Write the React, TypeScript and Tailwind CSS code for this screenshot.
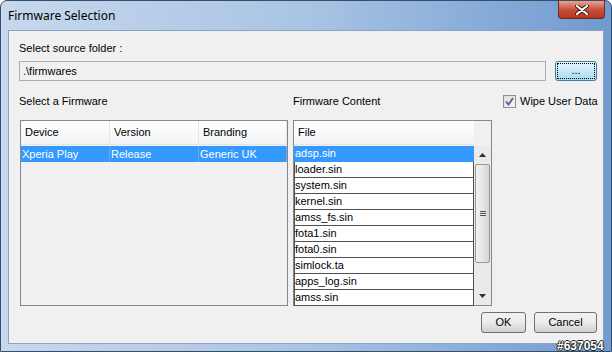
import { useState } from "react";

const firmwares = [{ device: "Xperia Play", version: "Release", branding: "Generic UK" }];

const files = [
  "adsp.sin",
  "loader.sin",
  "system.sin",
  "kernel.sin",
  "amss_fs.sin",
  "fota1.sin",
  "fota0.sin",
  "simlock.ta",
  "apps_log.sin",
  "amss.sin",
];

const font = { fontFamily: "Tahoma, 'Liberation Sans', Arial, sans-serif" };

export default function App() {
  const [wipe, setWipe] = useState(true);
  const [selectedFile] = useState(0);

  return (
    <div
      className="relative w-[612px] h-[352px] flex flex-col rounded-t-[7px] border border-[#3a4d66] bg-gradient-to-r from-[#c6d8ed] via-[#a9c4e4] to-[#6f9ad0] text-[11px] text-black overflow-hidden"
      style={font}
    >
      {/* Title bar */}
      <div className="h-[29px] flex items-start justify-between pl-[7px] pr-[6px] shrink-0">
        <span className="mt-[6px] text-[12px] text-black" style={{ fontFamily: "'Noto Sans', 'Liberation Sans', sans-serif" }}>
          Firmware Selection
        </span>
        <button className="w-[47px] h-[18px] rounded-b-[4px] border border-t-0 border-[#6b2a22] bg-gradient-to-b from-[#e8a393] via-[#c75040] to-[#b8341f] flex items-center justify-center">
          <svg width="14" height="10" viewBox="0 0 14 10">
            <path d="M2 1 L12 9 M12 1 L2 9" stroke="#3b1a14" strokeWidth="4" strokeLinecap="round" />
            <path d="M2 1 L12 9 M12 1 L2 9" stroke="#ffffff" strokeWidth="2.2" strokeLinecap="round" />
          </svg>
        </button>
      </div>

      {/* Client area */}
      <div className="mx-[7px] mb-[7px] flex-1 flex flex-col bg-[#f0f0f0] border border-[#8aa3c2] pl-[10px] pr-[6px] pt-[9px]">
        <div className="h-[16px] leading-[16px]">Select source folder :</div>

        <div className="mt-[5px] flex items-center gap-[9px]">
          <div className="w-[529px] h-[20px] bg-[#f0f0f0] border border-[#abadb3] flex items-center pl-[3px]">.\firmwares</div>
          <button className="w-[42px] h-[20px] rounded-[3px] border border-[#3c7fb1] bg-gradient-to-b from-[#eaf6fd] to-[#a7d9f5] flex items-center justify-center">
            <span className="w-[38px] h-[16px] border border-dotted border-black flex items-center justify-center leading-none pb-[2px]">...</span>
          </button>
        </div>

        <div className="mt-[12px] h-[16px] flex items-center leading-[16px] whitespace-nowrap">
          <span className="w-[274px] shrink-0">Select a Firmware</span>
          <span className="w-[210px] shrink-0">Firmware Content</span>
          <label className="flex items-center gap-[4px] shrink-0">
            <span
              onClick={() => setWipe(!wipe)}
              className="w-[13px] h-[13px] border border-[#8f8f8f] bg-gradient-to-br from-[#dcdcdc] to-[#f7f7f7] flex items-center justify-center"
            >
              {wipe && (
                <svg width="9" height="9" viewBox="0 0 9 9">
                  <path d="M1 4.5 L3.5 7.5 L8 1" stroke="#4a5f97" strokeWidth="1.8" fill="none" />
                </svg>
              )}
            </span>
            <span>Wipe User Data</span>
          </label>
        </div>

        <div className="mt-[11px] flex gap-[5px] h-[186px]">
          {/* Firmware table */}
          <div className="ml-[1px] w-[268px] h-full border border-[#828790] bg-[#f0f0f0] flex flex-col">
            <div className="h-[24px] flex bg-gradient-to-b from-[#ffffff] to-[#f3f4f6] border-b border-[#e5e5e5]">
              {["Device", "Version", "Branding"].map((h, i) => (
                <div
                  key={h}
                  className={`h-full flex items-center pl-[4px] border-r border-[#e3e6ea] ${i === 2 ? "flex-1" : "w-[89px]"}`}
                >
                  {h}
                </div>
              ))}
            </div>
            {firmwares.map((f) => (
              <div key={f.device} className="mt-[1px] h-[16px] flex bg-[#3399ff] text-white">
                <div className="w-[89px] pl-[1px] border-r border-[#7aa5cf] leading-[16px]">{f.device}</div>
                <div className="w-[89px] pl-[1px] border-r border-[#7aa5cf] leading-[16px]">{f.version}</div>
                <div className="flex-1 pl-[1px] border-r border-[#7aa5cf] leading-[16px]">{f.branding}</div>
              </div>
            ))}
          </div>

          {/* Files table */}
          <div className="w-[199px] h-full border border-[#828790] bg-[#f0f0f0] flex flex-col">
            <div className="h-[24px] flex">
              <div className="w-[180px] h-full flex items-center pl-[4px] bg-gradient-to-b from-[#ffffff] to-[#f3f4f6] border-b border-[#e5e5e5]">
                File
              </div>
              <div className="flex-1 bg-[#f0f0f0]" />
            </div>
            <div className="mt-[1px] flex flex-1 min-h-0">
              <div className="w-[180px] flex flex-col">
                {files.map((f, i) => (
                  <div
                    key={f}
                    className={`h-[16px] leading-[15px] border-l border-b border-r ${
                      i === selectedFile
                        ? "bg-[#3399ff] text-white border-[#3399ff]"
                        : "bg-white text-black border-[#505050]"
                    }`}
                  >
                    {f}
                  </div>
                ))}
              </div>
              {/* Scrollbar */}
              <div className="flex-1 flex flex-col items-center bg-[#eaeaea]">
                <div className="h-[18px] w-full flex items-center justify-center">
                  <svg width="7" height="4" viewBox="0 0 7 4">
                    <path d="M0 4 L3.5 0 L7 4 Z" fill="#303030" />
                  </svg>
                </div>
                <div className="w-[15px] h-[99px] rounded-[2px] border border-[#979797] bg-gradient-to-r from-[#f2f2f2] via-[#e6e6e6] to-[#d4d4d4] flex items-center justify-center">
                  <div className="flex flex-col gap-[1px]">
                    <div className="w-[6px] h-[1px] bg-[#555]" />
                    <div className="w-[6px] h-[1px] bg-[#555]" />
                    <div className="w-[6px] h-[1px] bg-[#555]" />
                  </div>
                </div>
                <div className="flex-1" />
                <div className="h-[18px] w-full flex items-center justify-center">
                  <svg width="7" height="4" viewBox="0 0 7 4">
                    <path d="M0 0 L3.5 4 L7 0 Z" fill="#303030" />
                  </svg>
                </div>
              </div>
            </div>
          </div>
        </div>

        <div className="mt-[6px] flex justify-end gap-[8px]">
          <button className="w-[45px] h-[21px] rounded-[3px] border border-[#707070] bg-gradient-to-b from-[#f2f2f2] via-[#ebebeb] to-[#cfcfcf]">
            OK
          </button>
          <button className="w-[63px] h-[21px] rounded-[3px] border border-[#707070] bg-gradient-to-b from-[#f2f2f2] via-[#ebebeb] to-[#cfcfcf]">
            Cancel
          </button>
        </div>
      </div>

      <div className="absolute left-[556px] top-[339px] text-[12px] font-bold text-white leading-none" style={{ textShadow: "1px 0 #222, -1px 0 #222, 0 1px #222, 0 -1px #222" }}>
        #637054
      </div>
    </div>
  );
}
